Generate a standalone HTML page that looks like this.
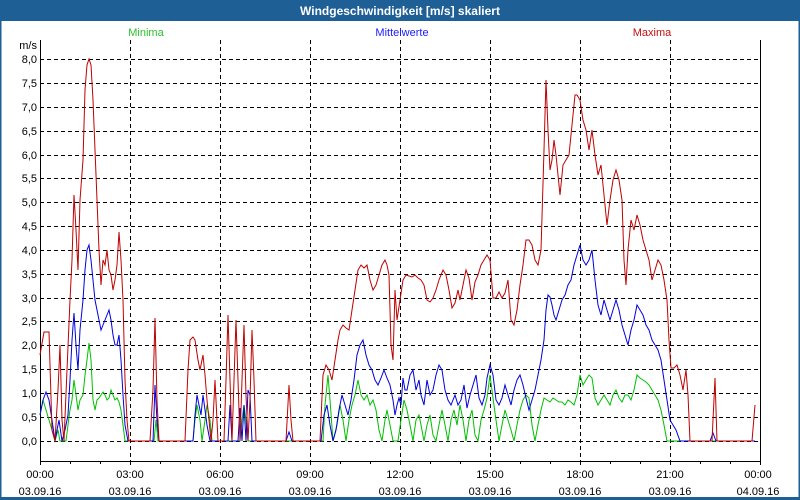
<!DOCTYPE html>
<html><head><meta charset="utf-8"><style>
html,body{margin:0;padding:0;background:#fff;}
svg{display:block;font-family:"Liberation Sans",sans-serif;}
</style></head><body>
<svg width="800" height="500" viewBox="0 0 800 500" xmlns="http://www.w3.org/2000/svg">
<rect x="0" y="0" width="800" height="500" fill="#fff"/>
<rect x="0" y="0" width="800" height="21" fill="#1e5f95"/>
<rect x="0" y="0" width="1.5" height="500" fill="#1e5f95"/>
<rect x="798.5" y="0" width="1.5" height="500" fill="#1e5f95"/>
<rect x="0" y="497" width="800" height="3" fill="#1e5f95"/>
<text x="400" y="15" fill="#fff" font-size="12" font-weight="bold" text-anchor="middle">Windgeschwindigkeit [m/s] skaliert</text>
<text x="146" y="36" fill="#2ec02e" font-size="11" text-anchor="middle">Minima</text>
<text x="402" y="36" fill="#1a1aff" font-size="11" text-anchor="middle">Mittelwerte</text>
<text x="652" y="36" fill="#c01010" font-size="11" text-anchor="middle">Maxima</text>
<g stroke="#000" stroke-width="1" stroke-dasharray="4,3" fill="none" shape-rendering="crispEdges">
<path d="M40 441.5H760M40 417.5H760M40 393.5H760M40 369.5H760M40 345.5H760M40 321.5H760M40 298.5H760M40 274.5H760M40 250.5H760M40 226.5H760M40 202.5H760M40 178.5H760M40 155.5H760M40 131.5H760M40 107.5H760M40 83.5H760M40 59.5H760"/>
<path d="M130.5 40V461M220.5 40V461M310.5 40V461M400.5 40V461M490.5 40V461M580.5 40V461M670.5 40V461"/>
</g>
<path d="M40.5 40V461.5H760.5V40" stroke="#000" fill="none" shape-rendering="crispEdges"/>
<path d="M40.5 461v4M70.5 461v3M100.5 461v3M130.5 461v4M160.5 461v3M190.5 461v3M220.5 461v4M250.5 461v3M280.5 461v3M310.5 461v4M340.5 461v3M370.5 461v3M400.5 461v4M430.5 461v3M460.5 461v3M490.5 461v4M520.5 461v3M550.5 461v3M580.5 461v4M610.5 461v3M640.5 461v3M670.5 461v4M700.5 461v3M730.5 461v3M760.5 461v4" stroke="#000" shape-rendering="crispEdges"/>
<g font-size="11" fill="#000" text-anchor="end">
<text x="37" y="49">m/s</text>
<text x="37" y="445">0,0</text><text x="37" y="421">0,5</text><text x="37" y="397">1,0</text><text x="37" y="373">1,5</text>
<text x="37" y="349">2,0</text><text x="37" y="325">2,5</text><text x="37" y="302">3,0</text><text x="37" y="278">3,5</text>
<text x="37" y="254">4,0</text><text x="37" y="230">4,5</text><text x="37" y="206">5,0</text><text x="37" y="182">5,5</text>
<text x="37" y="159">6,0</text><text x="37" y="135">6,5</text><text x="37" y="111">7,0</text><text x="37" y="87">7,5</text>
<text x="37" y="63">8,0</text>
</g>
<g font-size="11" fill="#000" text-anchor="middle">
<text x="40" y="478">00:00</text><text x="40" y="495">03.09.16</text>
<text x="130" y="478">03:00</text><text x="130" y="495">03.09.16</text>
<text x="220" y="478">06:00</text><text x="220" y="495">03.09.16</text>
<text x="310" y="478">09:00</text><text x="310" y="495">03.09.16</text>
<text x="400" y="478">12:00</text><text x="400" y="495">03.09.16</text>
<text x="490" y="478">15:00</text><text x="490" y="495">03.09.16</text>
<text x="580" y="478">18:00</text><text x="580" y="495">03.09.16</text>
<text x="670" y="478">21:00</text><text x="670" y="495">03.09.16</text>
<text x="758" y="478">00:00</text><text x="758" y="495">04.09.16</text>
</g>
<polyline fill="none" stroke="#00c000" stroke-width="1" points="40,415 43,400 46,410 49,420 52,430 55,441 58,430 60,441 66,441 68,425 70,410 72,400 74,380 76,395 78,410 80,400 83,395 85,375 87,360 89,343 91,360 93,400 95,410 97,400 99,398 101,395 103,392 105,395 107,400 109,398 111,390 113,395 115,400 117,398 119,402 121,410 123,425 125,441 154,441 156,420 158,441 193,441 195,420 197,405 200,420 202,441 205,420 207,405 210,420 212,441 240,441 242,420 244,405 246,420 248,441 323,441 325,405 328,375 330,400 333,441 337,425 340,405 343,420 346,441 349,420 352,405 355,395 358,380 361,395 364,400 367,395 370,405 373,400 376,410 379,430 382,441 385,420 387,410 390,425 393,441 398,441 401,420 404,400 407,410 410,425 413,441 416,420 419,415 421,425 424,441 427,425 430,415 433,435 436,441 439,425 442,410 445,425 448,441 451,420 454,410 457,425 460,405 463,420 466,441 469,420 472,410 475,435 478,441 481,420 484,410 487,398 490,375 493,398 496,420 499,441 502,425 505,410 508,420 511,430 514,441 517,425 520,410 523,400 526,395 529,398 532,425 535,441 538,425 541,410 544,398 547,400 550,402 553,398 556,400 559,402 562,402 565,405 568,400 571,402 574,405 577,395 580,375 583,385 586,380 589,375 592,378 595,398 598,405 601,400 604,395 607,400 610,405 613,395 616,390 619,398 622,402 625,395 628,395 631,400 634,390 637,375 640,378 643,380 646,382 649,385 652,390 655,395 658,400 661,410 664,425 667,441 755,441"/>
<polyline fill="none" stroke="#0000e0" stroke-width="1" points="40,415 43,400 46,392 49,400 52,420 55,441 57,430 59,420 62,441 65,430 68,415 70,380 72,340 74,313 76,345 78,370 80,330 83,300 85,270 87,250 89,245 91,260 93,280 95,300 97,310 99,320 101,330 103,325 105,320 107,315 109,310 111,320 113,335 115,345 117,345 119,335 121,360 123,395 125,425 128,441 153,441 155,385 157,420 159,441 193,441 195,415 197,395 199,405 201,415 203,395 205,410 207,425 210,441 228,441 230,405 232,441 238,441 240,408 242,441 244,405 246,441 248,390 250,395 252,441 286,441 289,432 292,441 321,441 324,415 327,405 330,425 333,441 336,430 339,410 342,395 345,405 348,415 351,400 354,380 357,355 360,345 363,340 366,355 369,365 372,370 375,380 378,385 381,378 384,370 387,378 390,385 393,400 395,415 397,405 399,398 401,405 403,378 405,390 407,390 410,375 413,370 416,390 419,380 421,395 424,405 427,380 430,395 433,390 436,375 439,365 442,370 445,390 448,400 451,405 455,395 458,405 461,400 464,385 467,408 470,395 473,385 476,375 479,398 482,405 485,395 487,378 490,365 493,375 496,400 499,405 502,398 505,385 508,395 511,405 514,390 517,380 520,375 523,385 526,398 529,410 532,400 535,390 538,375 541,360 544,340 546,310 548,295 550,297 552,305 554,315 556,320 559,310 562,300 565,295 568,285 571,280 574,265 577,255 580,245 583,260 586,265 589,260 592,250 595,280 598,305 601,315 604,300 607,310 610,320 613,310 616,300 619,310 622,325 625,335 628,345 631,330 634,320 637,305 640,310 643,315 646,325 649,330 652,340 655,345 658,350 661,360 664,380 667,400 670,420 673,425 676,430 680,441 710,441 713,433 716,441 755,441"/>
<polyline fill="none" stroke="#c00000" stroke-width="1" points="40,355 44,332 49,332 52,430 55,441 58,390 60,345 62,420 64,441 67,370 70,300 72,260 74,195 76,230 78,270 80,200 83,160 85,90 87,65 89,59 91,65 93,100 95,150 97,200 99,250 101,285 103,260 105,265 107,250 109,270 111,275 113,290 115,280 117,265 119,232 121,260 123,300 125,380 127,420 129,441 150,441 153,390 155,318 157,400 159,441 185,441 188,370 190,340 193,337 195,340 198,360 200,370 203,355 205,375 207,400 209,420 211,441 213,420 215,380 218,441 224,441 226,380 228,315 230,380 232,441 234,380 236,320 238,380 240,441 242,380 244,325 246,395 248,441 250,400 252,330 254,380 256,441 286,441 289,385 291,420 293,441 320,441 323,375 326,365 329,370 332,380 335,360 338,340 340,330 343,325 346,328 349,330 352,310 355,290 358,270 361,265 364,268 367,265 370,280 373,290 376,285 379,275 382,265 385,260 387,265 389,275 391,345 393,360 395,290 397,320 400,300 403,280 406,275 409,276 412,277 415,275 418,278 421,280 424,285 427,300 430,302 433,298 436,290 439,280 443,270 446,275 449,290 452,308 455,303 458,290 460,300 463,285 466,270 469,278 472,300 475,282 478,275 481,265 484,260 487,255 490,260 493,298 496,298 499,292 502,298 505,293 508,280 511,320 514,325 517,310 520,285 523,265 526,240 529,240 532,245 535,260 538,265 541,250 544,150 546,80 548,130 550,170 552,160 554,140 556,155 558,175 560,195 563,165 566,160 569,155 572,125 575,95 577,95 580,100 583,120 586,130 589,150 592,130 595,155 598,175 601,165 604,195 607,225 610,200 613,180 616,170 619,180 622,200 624,260 626,285 628,250 631,220 634,230 637,215 640,225 643,240 646,250 649,260 652,280 655,270 658,260 661,265 664,280 667,300 669,340 671,368 674,368 677,365 680,375 683,390 686,370 688,395 690,441 712,441 715,378 717,441 752,441 755,405"/>
</svg>
</body></html>
